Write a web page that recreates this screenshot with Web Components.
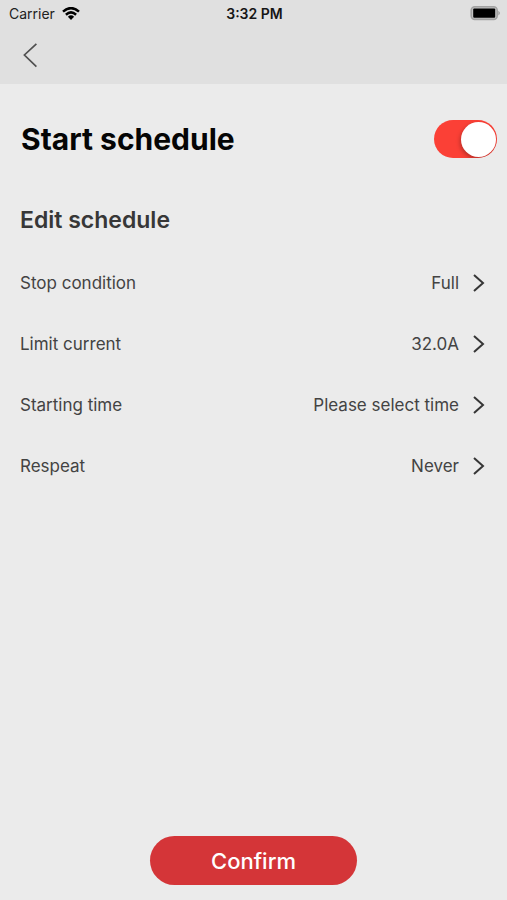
<!DOCTYPE html>
<html lang="en">
<head>
<meta charset="utf-8">
<meta name="viewport" content="width=device-width, initial-scale=1">
<title>Start schedule</title>
<style>
html, body { height: 100%; margin: 0; }
body { background: #ebebeb; color: #434343; font-family: Inter, "Liberation Sans", sans-serif; }
</style>
</head>
<body>
<schedule-page></schedule-page>
<script>
function define(name, html, setup) {
  customElements.define(name, class extends HTMLElement {
    connectedCallback() {
      if (this.shadowRoot) return;
      const template = document.createElement('template');
      template.innerHTML = '<style>*{box-sizing:border-box}button{font:inherit;color:inherit;border:0;background:none;padding:0;cursor:pointer}svg{display:block}</style>' + html;
      this.attachShadow({ mode: 'open' }).append(template.content.cloneNode(true));
      if (setup) setup(this, this.shadowRoot);
    }
  });
}

define('status-bar', `
<style>
:host { display: grid; grid-template-columns: 1fr auto 1fr; align-items: center; height: 28px; padding: 0 7px 0 9px; font-size: 14px; line-height: 20px; color: #222; }
.carrier { display: flex; align-items: center; gap: 7px; }
time { font-weight: 600; color: #161616; }
.battery { justify-self: end; }
</style>
<div class="carrier"><span>Carrier</span>
<svg width="18" height="14" viewBox="0 0 18 14" fill="none" stroke="#000" stroke-width="2.5" aria-label="Wi-Fi"><path d="M1 4.6Q9-2.4 17 4.6M3.9 7.7Q9 3.1 14.1 7.7"/><path d="M5.9 9.7Q9 7 12.1 9.7L9 13.1Z" fill="#000" stroke="none"/></svg></div>
<time>3:32 PM</time>
<svg class="battery" width="30" height="16" viewBox="0 0 30 16" aria-label="Battery full"><rect x="1.2" y=".8" width="26" height="12.6" rx="3.6" fill="#c4c4c4" stroke="#a2a2a2" stroke-width="1.6"/><rect x="3.2" y="2.4" width="22" height="9.4" rx="1"/><path d="M28.4 4.8Q31.4 7.1 28.4 9.4Z" fill="#999"/></svg>
`);

define('nav-bar', `
<style>
:host { display: flex; align-items: center; height: 56px; padding: 0 21px; }
button { display: grid; place-items: center; width: 20px; height: 40px; }
</style>
<button type="button" aria-label="Back"><svg width="20" height="26" viewBox="0 0 20 26" fill="none" stroke="#505050" stroke-width="1.7"><path d="M15.4 .8L3.4 12L15.4 23.6"/></svg></button>
`);

define('toggle-switch', `
<style>
:host { display: block; flex: none; }
input { appearance: none; display: flex; align-items: center; width: 63px; height: 38px; margin: 0; padding: 1px; border-radius: 19px; overflow: hidden; background: #bbb; cursor: pointer; }
input::before { content: ""; width: 35px; height: 35px; border-radius: 50%; background: #fff; box-shadow: -1px 2px 4px #0004; }
input:checked { justify-content: flex-end; background: #fb4036; }
</style>
<input type="checkbox" role="switch" checked>
`, (host, root) => { root.querySelector('input').setAttribute('aria-label', host.getAttribute('label')); });

define('setting-row', `
<style>
:host { display: block; }
button { display: flex; align-items: center; width: 100%; height: 61px; padding: 0 21px 0 20px; font-size: 17px; line-height: 24px; text-align: left; }
.label { flex: 1; }
svg { margin-left: 13px; }
</style>
<button type="button"><span class="label"><slot></slot></span><slot name="value"></slot>
<svg width="14" height="20" viewBox="0 0 14 20" fill="none" stroke="#363636" stroke-width="2" aria-hidden="true"><path d="M2 2L11 10L2 18"/></svg></button>
`);

define('confirm-button', `
<style>
:host { display: flex; justify-content: center; }
button { width: 41%; min-width: 180px; height: 49px; border-radius: 25px; background: #d43538; color: #fff; font-size: 22px; font-weight: 500; line-height: 30px; }
</style>
<button type="button"><slot></slot></button>
`);

define('schedule-page', `
<style>
:host { display: flex; flex-direction: column; min-height: 100%; }
header { background: #e0e0e0; }
main { flex: 1; }
.heading { display: flex; align-items: center; justify-content: space-between; padding: 36px 10px 0 21px; }
h1, h2 { margin: 0; }
h1 { color: #050505; font-size: 30px; line-height: 38px; font-weight: 700; }
h2 { padding: 46px 20px 16px; color: #373737; font-size: 23px; line-height: 32px; font-weight: 600; }
footer { padding-bottom: 15px; }
</style>
<header><status-bar></status-bar><nav-bar></nav-bar></header>
<main>
<div class="heading"><h1>Start schedule</h1><toggle-switch label="Start schedule"></toggle-switch></div>
<h2>Edit schedule</h2>
<setting-row>Stop condition<span slot="value">Full</span></setting-row>
<setting-row>Limit current<span slot="value">32.0A</span></setting-row>
<setting-row>Starting time<span slot="value">Please select time</span></setting-row>
<setting-row>Respeat<span slot="value">Never</span></setting-row>
</main>
<footer><confirm-button>Confirm</confirm-button></footer>
`);
</script>
</body>
</html>
